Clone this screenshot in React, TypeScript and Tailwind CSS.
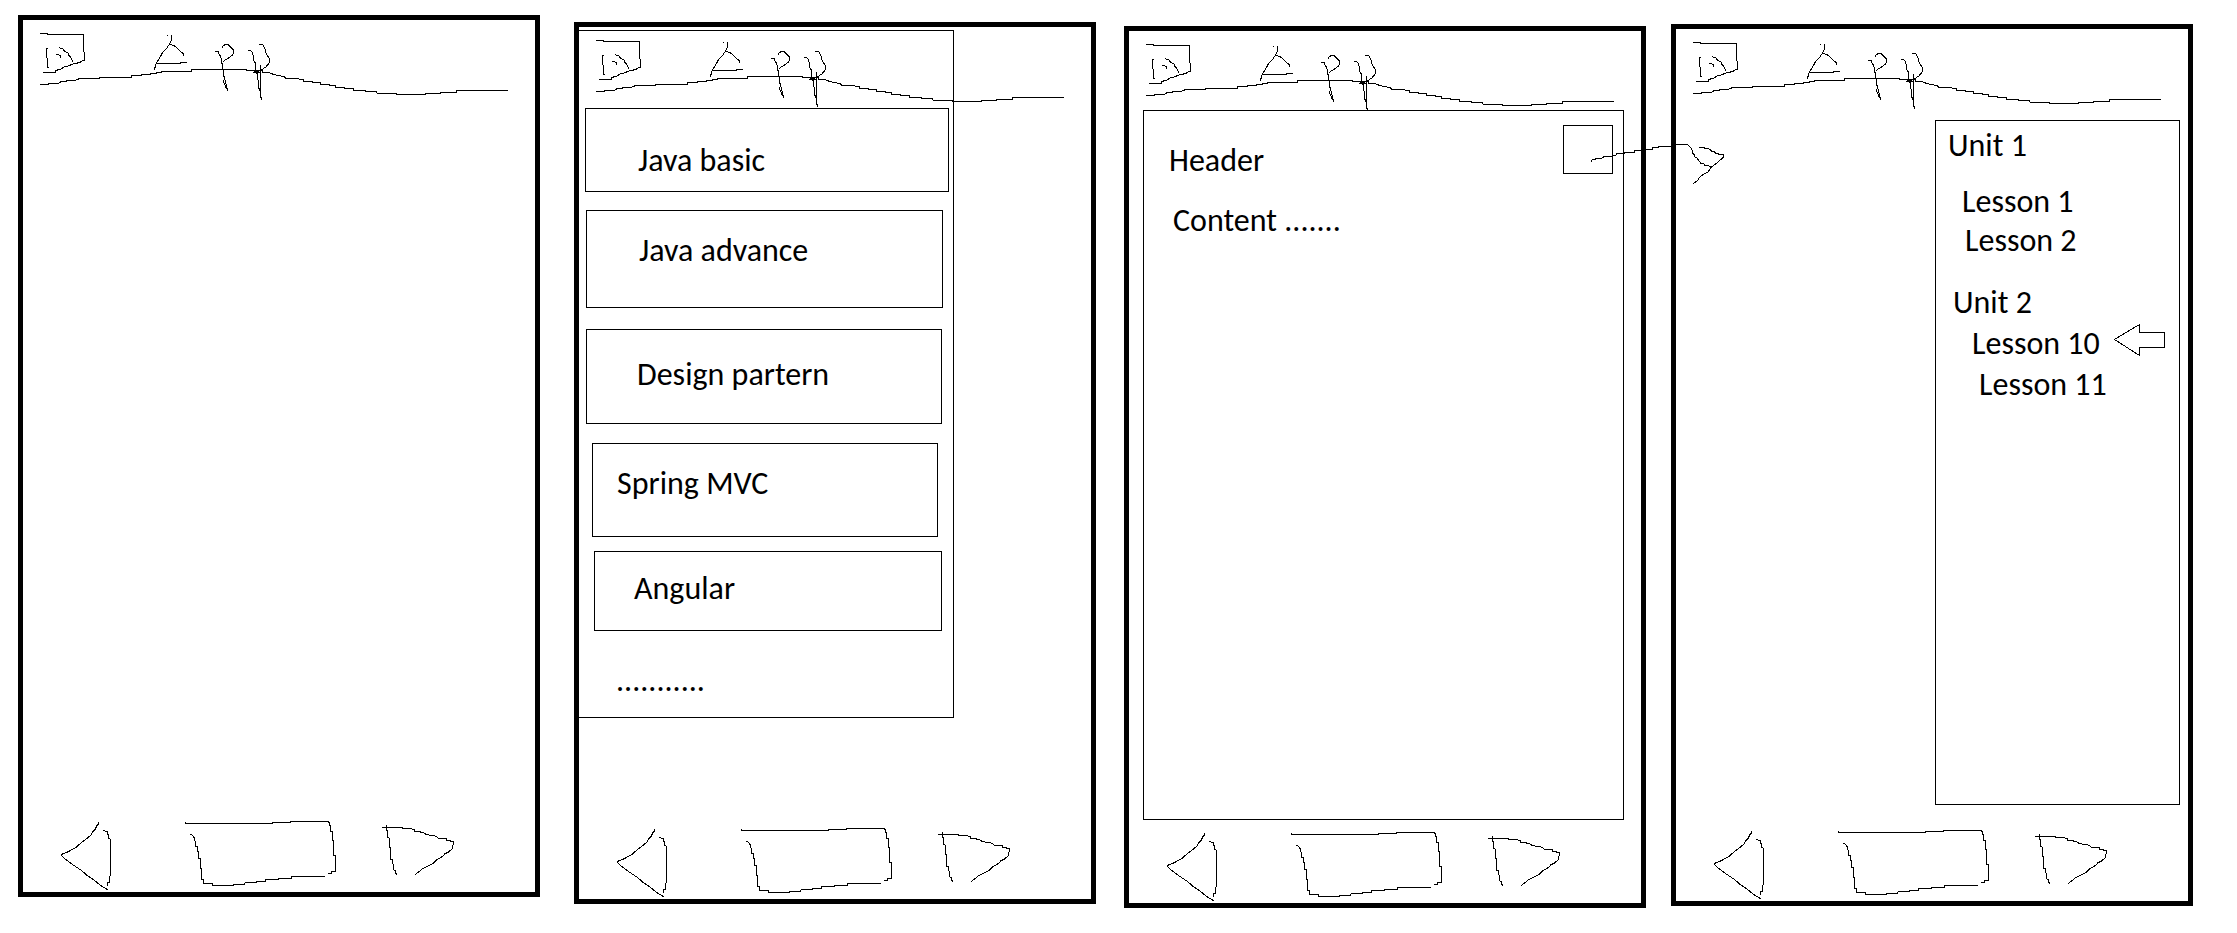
import type { ReactNode } from "react";

const TEXT = "font-['Carlito','Calibri','Lato',sans-serif] text-[32px] leading-9 text-black";

function Stroke({ d }: { d: string }) {
  return <path d={d} fill="none" stroke="black" strokeWidth={3} shapeRendering="crispEdges" />;
}

function Header() {
  return (
    <header className="relative h-[79px] shrink-0">
      <div className="flex items-start">
        <button type="button" aria-label="Open menu" className="ml-[15px]">
          <svg viewBox="114 60 144 165" className="block h-[55px] w-12">
            <Stroke d="M120 100.5H142.5V103.5H250.5V154.5L253.5 157.5V181.5L240 184.5V187.5L225 190.5L212 193.5V196.5L198 199.5L188 202.5V205.5L176 208.5L166.5 212.5V217.5H129" />
            <Stroke d="M144 145.5H139.5V172.5L142.5 177.5V202.5H147" />
            <Stroke d="M177 142.5L188 146.5L194 154.5L204 158.5L207 166.5L215 175.5L218 185.5" />
            <Stroke d="M168 163.5H175.5L181.5 167.5V173" />
          </svg>
        </button>
        <svg viewBox="447 60 384 249" className="ml-[63px] block h-[83px] w-32" role="img" aria-label="App">
          <Stroke d="M514.5 105V118.5L508.5 132.5L499.5 145.5L487.5 157.5L481.5 169.5L472.5 184.5L466.5 193.5V201L463.5 203V210" />
          <Stroke d="M501 106.5H504" />
          <Stroke d="M508.5 132.5L522 136.5L532 144.5L541 153.5L550.5 162V168" />
          <Stroke d="M466.5 190.5H541.5V187.5H561" />
          <Stroke d="M645 154.5H655.5V160L661.5 168.5L664.5 180.5V189L667.5 192V208L670.5 212V228L673.5 232L676.5 248L679.5 256V265L682.5 267V273" />
          <Stroke d="M670.5 240V246L676.5 258L679.5 268" />
          <Stroke d="M667.5 144V139.5L670.5 136.5L677 133.5H684L691.5 141.5L700.5 150V160.5L696 166.5L688 172.5L678 178.5L669 184.5" />
          <Stroke d="M744 151.5H750L755.5 155.5L761.5 172.5V181L766.5 190V216L772.5 222V238L775.5 243V264H778.5V273" />
          <Stroke d="M781.5 195V291L784.5 293V300" />
          <Stroke d="M778 133.5H787.5L790.5 138L795 145.5L797 158.5L805.5 171.5L808.5 177V186L804 193.5L798 200.5L788 207.5L781 210.5" />
          <Stroke d="M759 217.5H783" />
          <Stroke d="M763 213.5H777" />
        </svg>
      </div>
      <svg
        viewBox="69 60 1536 249"
        preserveAspectRatio="xMinYMin meet"
        className="pointer-events-none absolute top-0 left-0 block h-[83px] w-full"
        aria-hidden="true"
      >
        <Stroke d="M120 253.5H146.5V250.5H174L181.5 247.5V244.5H199.5V241.5H218L236.5 238.5V235.5H298.5V232.5H394.5V226.5H424.5V223.5H451V220.5H468.5V217.5H484.5V214.5H574.5V208.5H739.5V211.5H787.5V217.5H803.5L817 220.5V223.5L838 226.5L855 231.5V235.5H890L909 239.5V243.5H937V246.5H962V252.5H987V256.5H1007.5V261.5H1032.5V265.5H1061.5V271.5H1095V274.5H1128L1131 279.5H1188V283.5H1275V280.5H1320.5V277.5H1369.5V271.5H1524" />
      </svg>
    </header>
  );
}

function BottomNav() {
  return (
    <nav className="mt-auto flex h-[83px] shrink-0" aria-label="Device navigation">
      <button type="button" aria-label="Back" className="ml-[37px]">
        <svg viewBox="180 27 156 249" className="block h-[83px] w-[52px]">
          <Stroke d="M295.5 66V72L289.5 78L286.5 87L277.5 96L273.5 104L265 112L253 121L241 130.5L229 141.5L214 150L202 156.5L187 162L184.5 166.5L194 176L220 195L244 211L262 227L281 239L300 255L316 265L323 269" />
          <Stroke d="M309 91.5H314L316 94.5H322.5V103L325.5 105V114L331.5 118V227L328.5 230V246L322.5 249V259" />
        </svg>
      </button>
      <button type="button" aria-label="Home" className="ml-[72px]">
        <svg viewBox="552 27 462 249" className="block h-[83px] w-[154px]">
          <Stroke d="M556.5 66V70.5H817.5V67.5H871.5V64.5H983L988.5 67.5V75L991.5 77V94.5H997.5V120L1000.5 123V165L1006.5 167V214.5H994.5V220.5H984" />
          <Stroke d="M570 103.5H574L577.5 106.5L583.5 114V122L586.5 126V139.5H592.5V154.5H595.5V174.5H601.5V205.5H604.5V238.5H610.5V250.5H637.5V256.5H700.5V253.5H732V250.5L738 247.5H768V244.5H795L798 238.5H834V235.5H874.5V229.5H975" />
        </svg>
      </button>
      <button type="button" aria-label="Forward" className="ml-[42px]">
        <svg viewBox="1140 27 228 249" className="block h-[83px] w-[76px]">
          <Stroke d="M1146 82.5H1207.5V85.5H1230L1242 88.5V94.5H1260L1262 97.5L1276 99.5V103.5L1290 105.5L1308 108.5L1315.5 114.5H1338L1340.5 121.5H1350L1352 124.5H1360.5V133L1357.5 137V145L1346 156L1335 161L1330 168L1312 178L1300 190L1285 198L1267 207L1256 216L1245 223.5" />
          <Stroke d="M1159.5 75V90L1162.5 93V111.5L1167.5 114V141L1171.5 144V177.5L1177.5 179V191L1180.5 193V209.5L1186.5 211V220L1189.5 222V225" />
        </svg>
      </button>
    </nav>
  );
}

function Phone({ className, children }: { className: string; children?: ReactNode }) {
  return (
    <section
      className={`relative flex min-h-[882px] min-w-0 flex-1 flex-col border-[5px] border-black bg-white ${className}`}
    >
      <Header />
      {children}
      <BottomNav />
    </section>
  );
}

const courses = [
  { name: "Java basic", box: "mr-1 ml-1.5 h-[84px] pt-[34px] pl-[52px]" },
  { name: "Java advance", box: "mt-[18px] mr-2.5 ml-[7px] h-[98px] pt-[22px] pl-[52px]" },
  { name: "Design partern", box: "mt-[21px] mr-[11px] ml-[7px] h-[95px] pt-[27px] pl-[50px]" },
  { name: "Spring MVC", box: "mt-[19px] mr-[15px] ml-[13px] h-[94px] pt-[22px] pl-6" },
  { name: "Angular", box: "mt-3.5 mr-[11px] ml-[15px] h-20 pt-[19px] pl-[39px]" },
];

function CourseDrawer() {
  return (
    <div className="absolute top-[3px] left-0 flex h-[688px] w-[375px] flex-col border-y border-r border-black pt-[77px]">
      {courses.map((course) => (
        <button
          key={course.name}
          type="button"
          className={`flex shrink-0 items-start border border-black text-left ${course.box}`}
        >
          <span className={TEXT}>{course.name}</span>
        </button>
      ))}
      <p className={`mt-8 pl-[37px] ${TEXT}`}>...........</p>
    </div>
  );
}

function LessonPage() {
  return (
    <main className="mr-[17px] ml-3.5 flex-1 border border-black pt-3.5 pr-2.5 pl-[25px]">
      <div className="flex items-start justify-between">
        <h1 className={`pt-[18px] ${TEXT}`}>Header</h1>
        <button type="button" aria-label="Show units" className="relative h-[49px] w-[50px] border border-black">
          <svg
            viewBox="270 426 405 132"
            className="pointer-events-none absolute top-4 left-[26px] z-10 h-11 w-[135px] max-w-none"
            aria-hidden="true"
          >
            <Stroke d="M274.5 486V480.5L287 477.5V474.5H305L311 470.5H337L339 465.5H347L350 461.5H374V458.5H402L404 452.5H424V448.5H457V443.5H475V439.5H517" />
            <Stroke d="M527 433.5H562.5L570 440L578 453V459L584 465V470L591 474L600 486V489L612 492V496.5H618L637 499.5" />
            <Stroke d="M597 441.5H612V444.5H625L630 449L635 453.5L645 456.5V460.5H655V464.5H670.5V472L658 482L646 493L634 501L625 515L612 522L600 531L592 542L579 552" />
          </svg>
        </button>
      </div>
      <p className={`mt-6 pl-1 ${TEXT}`}>Content .......</p>
    </main>
  );
}

function UnitDrawer() {
  return (
    <aside className="absolute top-[91px] right-2 h-[685px] w-[245px] border border-black pt-[7px] pl-3">
      <h2 className={TEXT}>Unit 1</h2>
      <ul className="mt-5 pl-3.5">
        <li className="h-[39px]">
          <a href="#lesson-1" className={TEXT}>Lesson 1</a>
        </li>
        <li className="h-[39px] pl-[3px]">
          <a href="#lesson-2" className={TEXT}>Lesson 2</a>
        </li>
      </ul>
      <h2 className={`mt-[23px] pl-[5px] ${TEXT}`}>Unit 2</h2>
      <ul className="mt-[5px] pl-6">
        <li className="flex h-[41px] items-start">
          <a href="#lesson-10" className={TEXT}>Lesson 10</a>
          <svg viewBox="0 0 52 33" className="-mt-0.5 mr-[13px] ml-auto block h-[33px] w-[52px]" aria-hidden="true">
            <path
              d="M0.5 15.5L25.5 0.5V8.5H50.5V23.5H25.5V31.5Z"
              fill="none"
              stroke="black"
              shapeRendering="crispEdges"
            />
          </svg>
        </li>
        <li className="pl-[7px]">
          <a href="#lesson-11" className={TEXT}>Lesson 11</a>
        </li>
      </ul>
    </aside>
  );
}

export default function App() {
  return (
    <div className="flex min-h-screen items-start bg-white pr-11 pl-[18px]">
      <Phone className="mt-[15px]" />
      <Phone className="mt-[22px] ml-[34px]">
        <CourseDrawer />
      </Phone>
      <Phone className="mt-[26px] ml-7">
        <LessonPage />
      </Phone>
      <Phone className="mt-6 ml-[25px]">
        <UnitDrawer />
      </Phone>
    </div>
  );
}
